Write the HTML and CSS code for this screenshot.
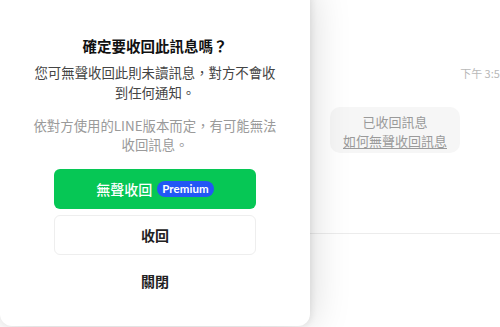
FILE: index.html
```html
<!DOCTYPE html>
<html lang="zh-Hant">
<head>
<meta charset="utf-8">
<link rel="stylesheet" href="styles.css">
</head>
<body>
<div class="chat">
  <div class="messages">
    <div class="time-row"><span class="time">下午 3:50</span></div>
    <div class="bubble">
      <div>已收回訊息</div>
      <div class="link">如何無聲收回訊息</div>
    </div>
  </div>
  <div class="composer"></div>
</div>
<div class="dialog">
  <h1 class="title">確定要收回此訊息嗎？</h1>
  <p class="desc">您可無聲收回此則未讀訊息，對方不會收到任何通知。</p>
  <p class="note">依對方使用的LINE版本而定，有可能無法收回訊息。</p>
  <div class="actions">
    <button class="btn btn-green">無聲收回<span class="badge">Premium</span></button>
    <button class="btn btn-white">收回</button>
    <button class="btn btn-plain">關閉</button>
  </div>
</div>
</body>
</html>
```

FILE: styles.css
```css
* { box-sizing: border-box; }
html, body { margin: 0; padding: 0; }
body {
  width: 500px;
  height: 327px;
  overflow: hidden;
  background: #ffffff;
  font-family: "Noto Sans CJK TC", "Noto Sans", sans-serif;
  position: relative;
}
.chat {
  display: flex;
  flex-direction: column;
  height: 327px;
}
.messages {
  height: 234px;
  border-bottom: 1px solid #ececec;
  padding-top: 64px;
}
.time-row {
  display: flex;
  justify-content: flex-end;
}
.time {
  font-size: 11px;
  color: #b8b8b8;
  line-height: 18px;
  margin-right: -6px;
  white-space: nowrap;
}
.bubble {
  margin-top: 25px;
  margin-left: 330px;
  width: 130px;
  height: 46px;
  border-radius: 10px;
  background: #f6f6f6;
  color: #9a9a9a;
  font-size: 13px;
  line-height: 19px;
  text-align: center;
  padding-top: 5px;
}
.link { text-decoration: underline; text-underline-offset: 2px; }
.composer { flex: 1; }

.dialog {
  position: absolute;
  left: 0;
  top: -12px;
  width: 310px;
  height: 338px;
  background: #ffffff;
  border-radius: 12px;
  box-shadow: 0 0 40px rgba(0,0,0,0.17), 2px 0 6px rgba(0,0,0,0.07);
  padding: 48px 28px 0;
  display: flex;
  flex-direction: column;
  align-items: center;
}
.title {
  margin: 0;
  font-size: 14.5px;
  font-weight: 700;
  color: #111;
  line-height: 20px;
  text-align: center;
}
.desc {
  margin: 6px 0 0;
  font-size: 13.4px;
  line-height: 20px;
  color: #444;
  text-align: center;
  width: 250px;
}
.note {
  margin: 14px 0 0;
  font-size: 13.4px;
  line-height: 19px;
  color: #9a9a9a;
  text-align: center;
  width: 250px;
}
.actions {
  margin-top: 15px;
  width: 202px;
  display: flex;
  flex-direction: column;
  gap: 6px;
}
.btn {
  height: 40px;
  border-radius: 6px;
  border: none;
  font-family: "Noto Sans CJK TC", "Noto Sans", sans-serif;
  font-size: 14px;
  display: flex;
  align-items: center;
  justify-content: center;
  padding: 0;
}
.btn-green {
  background: #06c755;
  color: #fff;
  font-weight: 500;
}
.badge {
  margin-left: 5px;
  background: #2357f5;
  color: #fff;
  font-family: "Lato", "Inter", sans-serif;
  font-weight: 700;
  font-size: 11.5px;
  line-height: 16px;
  height: 16px;
  padding: 0 5px;
  border-radius: 8px;
  letter-spacing: 0.1px;
}
.btn-white {
  background: #fff;
  border: 1px solid #eeeeee;
  color: #222;
  font-weight: 700;
}
.btn-plain {
  background: transparent;
  color: #222;
  font-weight: 700;
}
```
